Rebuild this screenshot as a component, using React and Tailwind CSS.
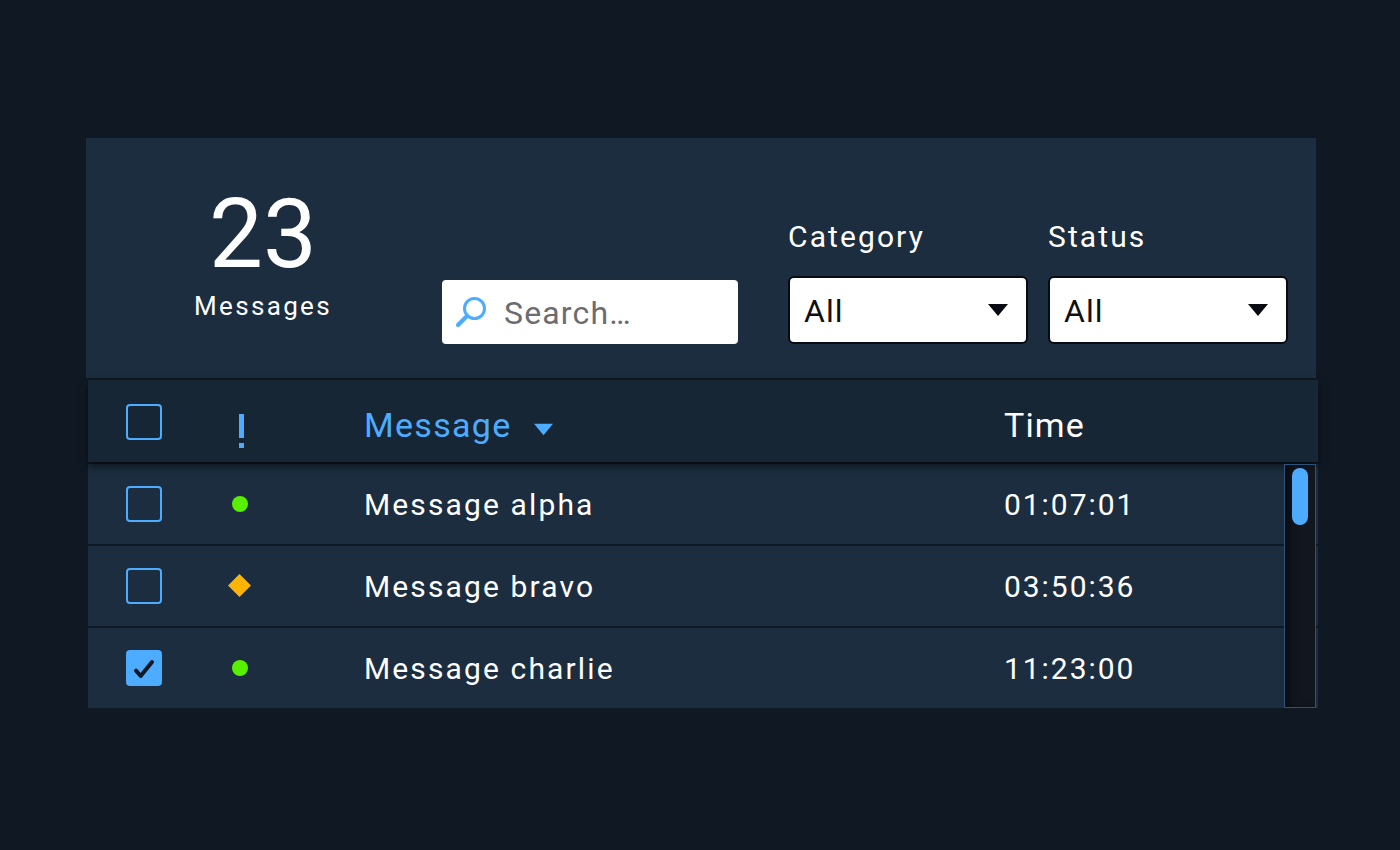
const ROBOTO = "font-['Roboto',sans-serif]";

function Box({ checked }) {
  if (checked) {
    return (
      <div className="w-9 h-9 rounded-[4px] bg-[#4dacff] flex items-center justify-center">
        <svg width="24" height="24" viewBox="0 0 24 24" fill="none">
          <path d="M4 14.7 L8.7 20 L20 6" stroke="#101923" strokeWidth="4" strokeLinecap="round" strokeLinejoin="round" />
        </svg>
      </div>
    );
  }
  return <div className="w-9 h-9 rounded-[4px] border-2 border-[#4dacff]" />;
}

function Dot() {
  return <div className="w-4 h-4 rounded-full bg-[#56f000]" />;
}

function Diamond() {
  return (
    <svg width="24" height="24" viewBox="0 0 24 24">
      <path d="M11.5 0 L23 11.5 L11.5 23 L0 11.5 Z" fill="#ffb302" />
    </svg>
  );
}

function Caret({ color, w = 20, h = 12 }) {
  return (
    <svg width={w} height={h} viewBox="0 0 20 12">
      <path d="M0 0 H20 L10 12 Z" fill={color} />
    </svg>
  );
}

function Select({ label }) {
  return (
    <div className="w-[240px] flex flex-col">
      <div className="text-[30px] leading-[36px] tracking-[2.1px] text-white mb-[21px]">{label}</div>
      <div className="h-[68px] rounded-[6px] border-2 border-[#080c12] bg-white flex items-center justify-between pl-[14px] pr-[18px]">
        <span className="text-[32px] leading-none text-[#101010] tracking-[1px] pt-[2px]">All</span>
        <Caret color="#080c12" />
      </div>
    </div>
  );
}

function Row({ children, name, time, h, divider, checked }) {
  return (
    <div className={h + " flex items-center bg-[#1b2d3e] " + (divider ? "border-b-2 border-[#101923]" : "")}>
      <div className="w-[38px] shrink-0" />
      <Box checked={checked} />
      <div className="w-[156px] shrink-0 flex justify-center">{children}</div>
      <div className="w-[700px] shrink-0 pl-[60px] -ml-[14px] pt-[2px] text-[30px] leading-[36px] tracking-[2.13px] text-white">{name}</div>
      <div className="text-[30px] leading-[36px] tracking-[1.95px] pt-[2px] text-white">{time}</div>
    </div>
  );
}

export default function App() {
  return (
    <div className={"min-h-[850px] bg-[#101923] pt-[138px] pl-[86px] " + ROBOTO}>
      <div className="w-[1230px] h-[240px] bg-[#1b2d3e] flex">
        <div className="w-[354px] shrink-0 flex flex-col items-center pt-[46px] text-white">
          <div className="text-[96px] leading-[100px]">23</div>
          <div className="text-[26px] leading-[30px] tracking-[2.35px] mt-[7px]">Messages</div>
        </div>
        <div className="w-[296px] h-[64px] mt-[142px] ml-[2px] rounded-[4px] bg-white flex items-center pl-[13px] shrink-0">
          <svg width="32" height="32" viewBox="0 0 32 32" fill="none">
            <circle cx="19.5" cy="12.5" r="10" stroke="#4dacff" strokeWidth="3" />
            <path d="M12 20 L3 29" stroke="#4dacff" strokeWidth="4.2" strokeLinecap="round" />
          </svg>
          <span className="ml-[17px] pt-[2px] text-[32px] leading-none tracking-[1.15px] text-[#6b6b70]">Search…</span>
        </div>
        <div className="ml-[50px] pt-[81px] flex gap-[20px]">
          <Select label="Category" />
          <Select label="Status" />
        </div>
      </div>
      <div className="w-[1230px] ml-[2px] mt-[2px] relative">
        <div className="h-[82px] bg-[#172635] flex items-center shadow-[0_4px_8px_rgba(0,0,0,0.6)] relative z-10">
          <div className="w-[38px] shrink-0" />
          <div className="mt-[2px]"><Box /></div>
          <div className="w-[156px] shrink-0 flex justify-center pt-[19px] pl-[4px]">
            <svg width="6" height="34" viewBox="0 0 6 34"><path d="M0 0 H5 V24 H0 Z M0 29 H5 V34 H0 Z" fill="#4dacff" /></svg>
          </div>
          <div className="w-[700px] shrink-0 pl-[60px] -ml-[14px] pt-[8px] flex items-center text-[34px] leading-[40px] tracking-[1.3px] text-[#4dacff]">
            Message
            <span className="ml-[22px] mt-[8px]"><Caret color="#4dacff" w={19} h={13} /></span>
          </div>
          <div className="text-[34px] leading-[40px] tracking-[1.1px] pt-[8px] text-white">Time</div>
        </div>
        <div className="mt-[2px]">
          <Row h="h-[82px]" name="Message alpha" time="01:07:01" divider><Dot /></Row>
          <Row h="h-[82px]" name="Message bravo" time="03:50:36" divider><Diamond /></Row>
          <Row h="h-[80px]" name="Message charlie" time="11:23:00" checked><Dot /></Row>
        </div>
        <div className="absolute right-[2px] top-[84px] bottom-0 w-[32px] z-20 bg-[#11161f] border border-[#2c5379] pt-[3px] pl-[7px] shadow-[inset_8px_0_8px_-4px_rgba(0,0,0,0.6)]">
          <div className="w-4 h-[57px] rounded-full bg-[#4dacff]" />
        </div>
      </div>
    </div>
  );
}
